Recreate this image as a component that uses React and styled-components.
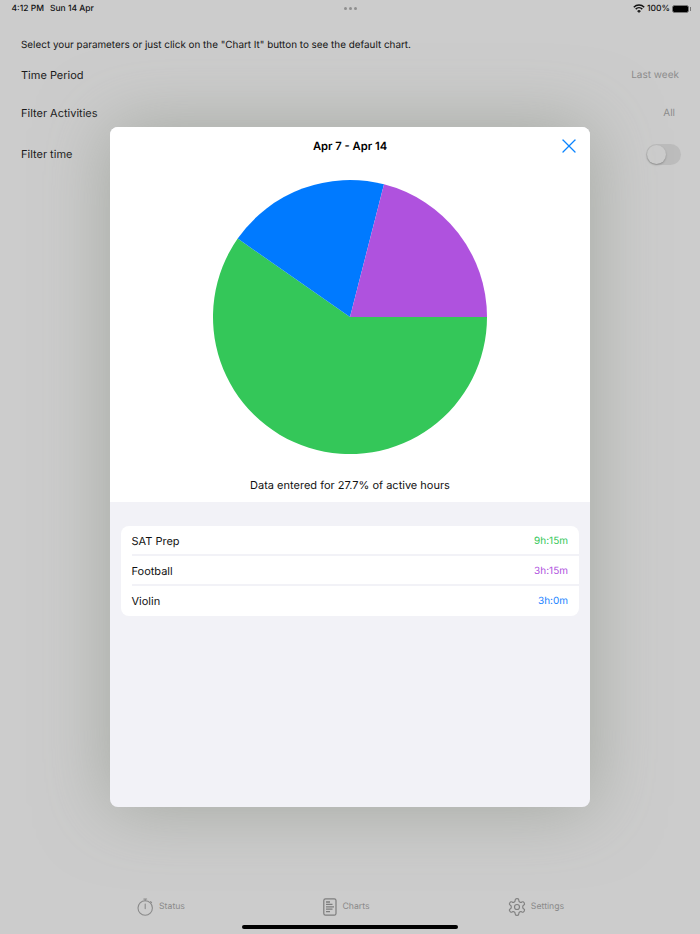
import React from "react";
import styled, { createGlobalStyle } from "styled-components";
import { X } from "lucide-react";

const GlobalStyle = createGlobalStyle`
    html, body {
        margin: 0;
        padding: 0;
    }
    body {
        background: #cccccc;
        font-family: Inter, "Liberation Sans", sans-serif;
        text-rendering: geometricPrecision;
    }
`;

const Screen = styled.div`
    position: relative;
    width: 700px;
    height: 934px;
    background: #cccccc;
    overflow: hidden;
    display: flex;
    flex-direction: column;
`;

const StatusBar = styled.div`
    height: 17px;
    padding: 0 10px 0 11.5px;
    display: grid;
    grid-template-columns: 1fr auto 1fr;
    align-items: center;
    font-size: 8.5px;
    font-weight: 500;
    color: #111;
`;

const StatusGroup = styled.div`
    display: flex;
    align-items: center;
    justify-content: ${({ $end }) => ($end ? "flex-end" : "flex-start")};
    gap: ${({ $gap }) => $gap}px;
`;

const Dots = styled.div`
    display: flex;
    gap: 2px;
`;

const Dot = styled.span`
    width: 3px;
    height: 3px;
    border-radius: 50%;
    background: #8f8f8f;
`;

const Battery = styled.div`
    position: relative;
    width: 17px;
    height: 8px;
    margin-right: 1px;
    border-radius: 2.5px;
    background: #000;
    border: 1px solid #777;
    box-sizing: border-box;

    &:after {
        content: "";
        position: absolute;
        right: -3px;
        top: 1px;
        width: 1px;
        height: 4px;
        background: #777;
    }
`;

const Content = styled.div`
    flex: 1;
    padding: 21px 21px 0 21px;
`;

const Intro = styled.div`
    font-size: 9.9px;
    line-height: 14px;
    color: #141414;
`;

const Row = styled.div`
    display: flex;
    align-items: center;
    justify-content: space-between;
    height: 20px;
    margin-top: ${({ $top }) => $top}px;
    font-size: 11px;
    color: #1a1a1a;
`;

const RowValue = styled.span`
    font-size: 10px;
    color: #8c8c8c;
    margin-right: ${({ $inset }) => $inset}px;
`;

const Toggle = styled.div`
    width: 35px;
    height: 21px;
    margin-right: -2px;
    border-radius: 11px;
    background: #bcbcbc;
    display: flex;
    align-items: center;
    padding-left: 1px;
    box-sizing: border-box;
`;

const Knob = styled.div`
    width: 19px;
    height: 19px;
    border-radius: 50%;
    background: #cccccc;
    box-shadow: 0 1px 2px rgba(0, 0, 0, 0.25);
`;

const TabBar = styled.div`
    height: 50px;
    box-sizing: border-box;
    display: flex;
    align-items: flex-start;
    justify-content: center;
    padding-top: 14px;
`;

const Tab = styled.div`
    width: ${({ $width }) => $width}px;
    height: 18px;
    display: flex;
    align-items: center;
    justify-content: center;
    gap: ${({ $gap }) => $gap}px;
    font-size: 8.7px;
    color: #8a8a8a;
`;

const HomeBar = styled.div`
    position: absolute;
    left: 242px;
    bottom: 5px;
    width: 216px;
    height: 4px;
    border-radius: 2px;
    background: #000;
`;

const Modal = styled.div`
    position: absolute;
    left: 110px;
    top: 127px;
    width: 480px;
    height: 680px;
    border-radius: 8px;
    overflow: hidden;
    background: #f2f2f7;
    display: flex;
    flex-direction: column;
`;

const ModalShadow = styled.div`
    position: absolute;
    left: 110px;
    top: 127px;
    width: 480px;
    height: 680px;
    border-radius: 8px;
    box-shadow: 0 0 70px rgba(150, 155, 145, 0.75);
`;

const ChartPanel = styled.div`
    background: #fff;
    height: 375px;
    display: flex;
    flex-direction: column;
    align-items: center;
`;

const ModalHeader = styled.div`
    position: relative;
    width: 100%;
    height: 37px;
    display: flex;
    align-items: center;
    justify-content: center;
    font-size: 11.2px;
    font-weight: 600;
    color: #000;
`;

const CloseButton = styled.div`
    position: absolute;
    right: 9px;
    top: 7px;
    display: flex;
    color: #0a84ff;
`;

const PieWrap = styled.svg`
    display: block;
    margin-top: 15px;
`;

const Caption = styled.div`
    margin-top: 22px;
    font-size: 11px;
    line-height: 16px;
    color: #111;
`;

const List = styled.div`
    margin: 24px 11px 0;
    background: #fff;
    border-radius: 8px;
    overflow: hidden;
`;

const ListRow = styled.div`
    height: 30px;
    margin-left: 10.5px;
    padding: ${({ $last }) => ($last ? "0" : "2px")} 11px 0 0;
    box-sizing: border-box;
    display: flex;
    align-items: center;
    justify-content: space-between;
    font-size: 11px;
    color: #111;
    border-bottom: ${({ $last }) => ($last ? "none" : "2px solid #f2f2f7")};
`;

const Duration = styled.span`
    font-size: 10px;
    color: ${({ $color }) => $color};
`;

const stats = [
    { name: "SAT Prep", time: "9h:15m", color: "#34c759" },
    { name: "Football", time: "3h:15m", color: "#af52de" },
    { name: "Violin", time: "3h:0m", color: "#1a84ff" }
];

const WifiIcon = () => (
    <svg width="12" height="9" viewBox="0 0 12 9" fill="none" stroke="#111" strokeWidth="1.5">
        <path d="M0.8 3.2a7.4 7.4 0 0 1 10.4 0" />
        <path d="M2.7 5.1a4.7 4.7 0 0 1 6.6 0" />
        <path d="M6 8.6L4.5 7a2.1 2.1 0 0 1 3 0Z" fill="#111" strokeWidth="0.6" />
    </svg>
);

const StopwatchIcon = () => (
    <svg width="17" height="18" viewBox="0 0 17 18" fill="none" stroke="#8a8a8a" strokeWidth="1.1">
        <circle cx="8.2" cy="10" r="7.2" />
        <path d="M6.8 1h2.8M8.2 1v1.6M8.2 6v4.6M13.6 3.6l1 1" strokeLinecap="round" />
    </svg>
);

const DocIcon = () => (
    <svg width="14" height="18" viewBox="0 0 14 18" fill="none" stroke="#7d7d7d">
        <rect x="0.8" y="0.8" width="12.2" height="16.4" rx="1.8" strokeWidth="1.2" />
        <path d="M3 4h4M3 6.4h6.5M3 8.8h8M3 11.2h6.5M3 13.6h4" strokeWidth="1.3" />
    </svg>
);

const GearIcon = () => (
    <svg width="20" height="20" viewBox="0 0 24 24" fill="none" stroke="#808080" strokeWidth="1.4" strokeLinejoin="round">
        <path d="M12.22 2h-.44a2 2 0 0 0-2 2v.18a2 2 0 0 1-1 1.73l-.43.25a2 2 0 0 1-2 0l-.15-.08a2 2 0 0 0-2.73.73l-.22.38a2 2 0 0 0 .73 2.73l.15.1a2 2 0 0 1 1 1.72v.51a2 2 0 0 1-1 1.74l-.15.09a2 2 0 0 0-.73 2.73l.22.38a2 2 0 0 0 2.73.73l.15-.08a2 2 0 0 1 2 0l.43.25a2 2 0 0 1 1 1.73V20a2 2 0 0 0 2 2h.44a2 2 0 0 0 2-2v-.18a2 2 0 0 1 1-1.73l.43-.25a2 2 0 0 1 2 0l.15.08a2 2 0 0 0 2.73-.73l.22-.39a2 2 0 0 0-.73-2.73l-.15-.08a2 2 0 0 1-1-1.74v-.5a2 2 0 0 1 1-1.74l.15-.09a2 2 0 0 0 .73-2.73l-.22-.38a2 2 0 0 0-2.73-.73l-.15.08a2 2 0 0 1-2 0l-.43-.25a2 2 0 0 1-1-1.73V4a2 2 0 0 0-2-2z" />
        <circle cx="12" cy="12" r="3" />
    </svg>
);

const Pie = () => (
    <PieWrap width="276" height="276" viewBox="-138 -138 276 276">
        <path d="M0 0L137 0A137 137 0 1 1 -112.3 -78.4Z" fill="#34c759" />
        <path d="M0 0L-112.3 -78.4A137 137 0 0 1 34 -132.7Z" fill="#007aff" />
        <path d="M0 0L34 -132.7A137 137 0 0 1 137 0Z" fill="#af52de" />
    </PieWrap>
);

export default function App() {
    return (
        <Screen>
            <GlobalStyle />
            <StatusBar>
                <StatusGroup $gap={6}>
                    <span>4:12 PM</span>
                    <span>Sun 14 Apr</span>
                </StatusGroup>
                <Dots>
                    <Dot />
                    <Dot />
                    <Dot />
                </Dots>
                <StatusGroup $gap={2} $end>
                    <WifiIcon />
                    <span>100%</span>
                    <Battery />
                </StatusGroup>
            </StatusBar>
            <Content>
                <Intro>Select your parameters or just click on the "Chart It" button to see the default chart.</Intro>
                <Row $top={13}>
                    <span>Time Period</span>
                    <RowValue $inset={0}>Last week</RowValue>
                </Row>
                <Row $top={18}>
                    <span>Filter Activities</span>
                    <RowValue $inset={4}>All</RowValue>
                </Row>
                <Row $top={21}>
                    <span>Filter time</span>
                    <Toggle>
                        <Knob />
                    </Toggle>
                </Row>
            </Content>
            <TabBar>
                <Tab $width={187} $gap={5}>
                    <StopwatchIcon />
                    <span>Status</span>
                </Tab>
                <Tab $width={184} $gap={5}>
                    <DocIcon />
                    <span>Charts</span>
                </Tab>
                <Tab $width={194} $gap={4}>
                    <GearIcon />
                    <span>Settings</span>
                </Tab>
            </TabBar>
            <HomeBar />
            <ModalShadow />
            <Modal>
                <ChartPanel>
                    <ModalHeader>
                        Apr 7 - Apr 14
                        <CloseButton>
                            <X size={24} strokeWidth={1.3} />
                        </CloseButton>
                    </ModalHeader>
                    <Pie />
                    <Caption>Data entered for 27.7% of active hours</Caption>
                </ChartPanel>
                <List>
                    {stats.map((s, i) => (
                        <ListRow key={s.name} $last={i === stats.length - 1}>
                            <span>{s.name}</span>
                            <Duration $color={s.color}>{s.time}</Duration>
                        </ListRow>
                    ))}
                </List>
            </Modal>
        </Screen>
    );
}
